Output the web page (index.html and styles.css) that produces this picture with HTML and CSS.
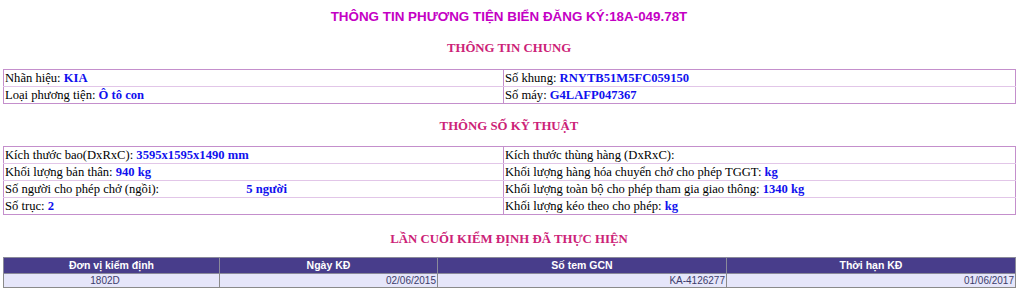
FILE: index.html
```html
<!DOCTYPE html>
<html lang="vi">
<head>
<meta charset="utf-8">
<title>Thông tin phương tiện</title>
<link rel="stylesheet" href="styles.css">
</head>
<body>
<div class="page">
  <h1 class="title">THÔNG TIN PHƯƠNG TIỆN BIỂN ĐĂNG KÝ:18A-049.78T</h1>

  <h2 class="section section-1">THÔNG TIN CHUNG</h2>
  <table class="info">
    <colgroup><col class="left"><col class="right"></colgroup>
    <tr>
      <td>Nhãn hiệu: <b class="val">KIA</b></td>
      <td>Số khung: <b class="val">RNYTB51M5FC059150</b></td>
    </tr>
    <tr>
      <td>Loại phương tiện: <b class="val">Ô tô con</b></td>
      <td>Số máy: <b class="val">G4LAFP047367</b></td>
    </tr>
  </table>

  <h2 class="section section-2">THÔNG SỐ KỸ THUẬT</h2>
  <table class="info">
    <colgroup><col class="left"><col class="right"></colgroup>
    <tr>
      <td>Kích thước bao(DxRxC): <b class="val">3595x1595x1490 mm</b></td>
      <td>Kích thước thùng hàng (DxRxC):</td>
    </tr>
    <tr>
      <td>Khối lượng bản thân: <b class="val">940 kg</b></td>
      <td>Khối lượng hàng hóa chuyển chở cho phép TGGT: <b class="val">kg</b></td>
    </tr>
    <tr>
      <td>Số người cho phép chở (ngồi): <b class="val seats">5 người</b></td>
      <td>Khối lượng toàn bộ cho phép tham gia giao thông: <b class="val">1340 kg</b></td>
    </tr>
    <tr>
      <td>Số trục: <b class="val">2</b></td>
      <td>Khối lượng kéo theo cho phép: <b class="val">kg</b></td>
    </tr>
  </table>

  <h2 class="section section-3">LẦN CUỐI KIỂM ĐỊNH ĐÃ THỰC HIỆN</h2>
  <table class="grid">
    <colgroup>
      <col class="c1"><col class="c2"><col class="c3"><col class="c4">
    </colgroup>
    <tr>
      <th>Đơn vị kiểm định</th>
      <th>Ngày KĐ</th>
      <th>Số tem GCN</th>
      <th>Thời hạn KĐ</th>
    </tr>
    <tr>
      <td class="center">1802D</td>
      <td>02/06/2015</td>
      <td>KA-4126277</td>
      <td>01/06/2017</td>
    </tr>
  </table>
</div>
</body>
</html>
```

FILE: styles.css
```css
html, body {
  margin: 0;
  padding: 0;
  background: #ffffff;
}

.page {
  width: 1012px;
  padding: 7px 0 0 3px;
  font-family: "Liberation Serif", "Times New Roman", serif;
  font-size: 12.6px;
  color: #000;
}

.title {
  margin: 0;
  height: 20px;
  line-height: 20px;
  text-align: center;
  font-family: "Liberation Sans", Arial, sans-serif;
  font-size: 13.4px;
  font-weight: bold;
  color: #c400c4;
}

.section {
  margin: 0;
  height: 20px;
  line-height: 20px;
  text-align: center;
  font-family: "Liberation Serif", "Times New Roman", serif;
  font-size: 12.8px;
  font-weight: bold;
  color: #cc2277;
}

.section-1 { margin-top: 11px; margin-bottom: 11px; }
.section-2 { margin-top: 12px; margin-bottom: 10px; }
.section-3 { margin-top: 14px; margin-bottom: 8px; }

.info {
  width: 1012px;
  border-collapse: collapse;
  border: 1px solid #c48fcc;
  table-layout: fixed;
}

.info .left { width: 500px; }
.info .right { width: 512px; }

.info td {
  height: 16px;
  padding: 0 1px;
  line-height: 16px;
  border: 1px solid #c48fcc;
  border-top-color: #e2c6e8;
  border-bottom-color: #e2c6e8;
  white-space: nowrap;
  vertical-align: middle;
}

.info tr:first-child td { border-top-color: #c48fcc; }
.info tr:last-child td { border-bottom-color: #c48fcc; }

.val {
  color: #1010ee;
  font-weight: bold;
}

.seats {
  margin-left: 84px;
}

.grid {
  width: 1012px;
  border-collapse: collapse;
  border: 1px solid #9a9a9a;
  table-layout: fixed;
  font-family: "Liberation Sans", Arial, sans-serif;
  font-size: 10px;
}

.c1 { width: 216px; }
.c2 { width: 218px; }
.c3 { width: 289px; }
.c4 { width: 289px; }

.grid th {
  height: 15px;
  padding: 0 2px;
  background: #483d8b;
  color: #ffffff;
  font-size: 10.5px;
  font-weight: bold;
  text-align: center;
  border: 1px solid #8a8a9a;
  line-height: 15px;
}

.grid td {
  height: 13px;
  padding: 0 1px;
  background: #e6e6fa;
  color: #3c3c6c;
  text-align: right;
  border: 1px solid #8a8a8a;
  line-height: 13px;
}

.grid td.center {
  text-align: center;
  padding-right: 14px;
}
```
